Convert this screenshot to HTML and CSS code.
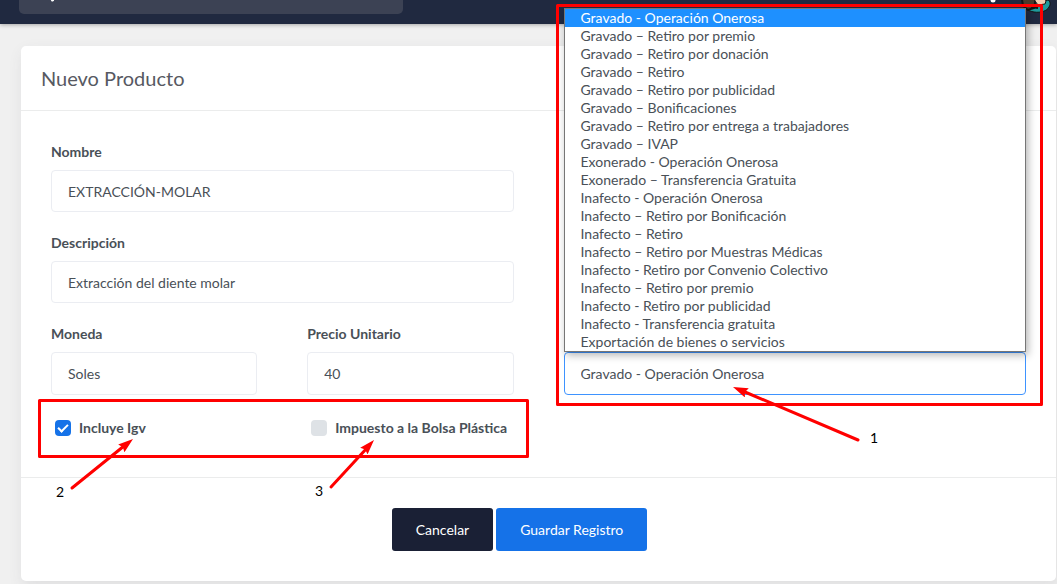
FILE: index.html
```html
<!DOCTYPE html>
<html lang="es">
<head>
<meta charset="utf-8">
<title>Nuevo Producto</title>
<link rel="stylesheet" href="styles.css">
</head>
<body>
<header class="topbar">
  <div class="search">
    <svg class="search-icon" viewBox="0 0 16 16" aria-hidden="true"><circle cx="6" cy="6" r="5"/><path d="M9.500 10l2 4"/></svg>
    <input class="search-input" type="search" aria-label="Buscar">
  </div>
  <div class="topbar-tools">
    <svg class="bell" viewBox="0 0 16 16" aria-hidden="true"><path d="M2 11h12l-2-3V5a4 4 0 0 0-8 0v3z"/><circle cx="8" cy="13" r="2.500"/></svg>
    <svg class="avatar" viewBox="0 0 36 36" aria-hidden="true">
      <path d="M8 27c-1 4 3 7 9 8 7 1 13-1 15-5 2-3 1-6-1-7z" fill="#1f9a9c" stroke="#141414" stroke-width="1"/>
      <path d="M4 16l2 13 5 4 6-2 3-15z" fill="#4a3a2c" stroke="#141414" stroke-width="2"/>
      <path d="M17 16l1 8 3 4 7-1 1-3-3-8z" fill="#f0cdb0" stroke="#141414" stroke-width="1"/>
      <path d="M14 30l7 1" fill="none" stroke="#141414" stroke-width="2"/>
    </svg>
  </div>
</header>

<main class="page">
  <form class="card">
    <div class="card-header"><h1 class="card-title">Nuevo Producto</h1></div>
    <div class="card-body">
      <div class="column">
        <div class="field">
          <label for="nombre">Nombre</label>
          <input class="control" id="nombre" type="text" value="EXTRACCIÓN-MOLAR">
        </div>
        <div class="field">
          <label for="descripcion">Descripción</label>
          <input class="control" id="descripcion" type="text" value="Extracción del diente molar">
        </div>
        <div class="pair">
          <div class="field">
            <label for="moneda">Moneda</label>
            <select class="control control-tall" id="moneda"><option>Soles</option></select>
          </div>
          <div class="field">
            <label for="precio">Precio Unitario</label>
            <input class="control control-tall" id="precio" type="text" inputmode="decimal" value="40">
          </div>
        </div>
        <div class="pair">
          <label class="check"><input type="checkbox" checked>Incluye Igv</label>
          <label class="check"><input type="checkbox">Impuesto a la Bolsa Plástica</label>
        </div>
      </div>
      <div class="column column-tax">
        <div class="dropdown">
          <select class="control control-tall control-active" aria-label="Tipo de afectación">
            <option>Gravado - Operación Onerosa</option>
          </select>
          <ul class="options">
            <li class="selected">Gravado - Operación Onerosa</li>
            <li>Gravado – Retiro por premio</li>
            <li>Gravado – Retiro por donación</li>
            <li>Gravado – Retiro</li>
            <li>Gravado – Retiro por publicidad</li>
            <li>Gravado – Bonificaciones</li>
            <li>Gravado – Retiro por entrega a trabajadores</li>
            <li>Gravado – IVAP</li>
            <li>Exonerado - Operación Onerosa</li>
            <li>Exonerado – Transferencia Gratuita</li>
            <li>Inafecto - Operación Onerosa</li>
            <li>Inafecto – Retiro por Bonificación</li>
            <li>Inafecto – Retiro</li>
            <li>Inafecto – Retiro por Muestras Médicas</li>
            <li>Inafecto - Retiro por Convenio Colectivo</li>
            <li>Inafecto – Retiro por premio</li>
            <li>Inafecto - Retiro por publicidad</li>
            <li>Inafecto - Transferencia gratuita</li>
            <li>Exportación de bienes o servicios</li>
          </ul>
        </div>
      </div>
    </div>
    <div class="card-footer">
      <button class="btn btn-dark" type="button">Cancelar</button>
      <button class="btn btn-primary" type="submit">Guardar Registro</button>
    </div>
  </form>
</main>

<svg class="notes" width="1057" height="584" viewBox="0 0 1057 584">
  <defs>
    <marker id="head" markerUnits="userSpaceOnUse" markerWidth="16" markerHeight="10" refX="15" refY="5" orient="auto">
      <path d="M15 5L0 0L2 5L0 10z" fill="#f00"/>
    </marker>
  </defs>
  <rect class="frame" x="557.500" y="5.500" width="484" height="399"/>
  <rect class="frame" x="39.500" y="400.500" width="488" height="56"/>
  <path class="arrow" d="M858 440L745 392"/>
  <path class="arrow" d="M72 488L124 446"/>
  <path class="arrow" d="M331 487L367 448"/>
  <path class="tip" d="M858 440L733 387"/>
  <path class="tip" d="M72 488L133 439"/>
  <path class="tip" d="M331 487L374 440"/>
  <text class="note" x="870" y="443">1</text>
  <text class="note" x="56" y="497">2</text>
  <text class="note" x="315" y="496">3</text>
</svg>
</body>
</html>
```
FILE: styles.css
```css
* { box-sizing: border-box; }

body {
  position: relative;
  margin: 0;
  min-height: 100vh;
  overflow: hidden;
  background: #f0f0f0;
  color: #495057;
  font: 14px/21px Lato, "Liberation Sans", sans-serif;
}

.topbar {
  display: flex;
  align-items: flex-end;
  justify-content: space-between;
  height: 24px;
  padding: 0 4px 0 19px;
  overflow: hidden;
  background: #202940;
  box-shadow: 0 1px 4px rgba(0, 0, 0, 0.3);
}

.search {
  display: flex;
  flex: 0 0 384px;
  align-items: center;
  height: 40px;
  margin-bottom: 10px;
  padding: 0 22px;
  border-radius: 5px;
  background: #3c4254;
}

.search-icon { width: 16px; height: 16px; fill: none; stroke: #fff; stroke-width: 3; stroke-linecap: round; }
.search-input { flex: 1; min-width: 0; border: 0; background: transparent; color: #fff; font: inherit; }

.topbar-tools { display: flex; align-items: flex-end; gap: 16px; }
.bell { width: 16px; height: 16px; margin-bottom: 21px; fill: #fff; }
.avatar { width: 36px; height: 36px; margin-bottom: 11px; }

.page { padding: 22px 1px 3px 21px; }

.card {
  border-radius: 5px;
  background: #fff;
  box-shadow: 2px 6px 15px rgba(69, 65, 78, 0.1);
}

.card-header {
  padding: 18px 20px;
  border-bottom: 1px solid #ebecec;
}

.card-title {
  margin: 0;
  color: #575962;
  font-size: 20px;
  font-weight: 400;
  line-height: 28px;
}

.card-body {
  display: grid;
  grid-template-columns: 1fr 1fr;
  gap: 50px;
  padding: 30px 30px 39px;
}

.column { display: flex; flex-direction: column; gap: 20px; }
.column-tax { justify-content: flex-end; padding-bottom: 43px; }

.field { display: flex; flex-direction: column; gap: 8px; }
.field label, .check { color: #495057; font-weight: 700; }

.pair { display: grid; grid-template-columns: 1fr 1fr; gap: 50px; }

.control {
  display: block;
  width: 100%;
  height: 42px;
  padding: 0 16px;
  border: 1px solid #ebedf2;
  border-radius: 4px;
  background: #fff;
  color: #495057;
  font: inherit;
  appearance: none;
}

.control-tall { height: 43px; }
.control-active { border-color: #3e93ff; }

.check {
  display: flex;
  align-items: center;
  gap: 8px;
  padding: 2px 0 0 4px;
  white-space: nowrap;
}

.check input {
  width: 16px;
  height: 16px;
  margin: 0;
  border-radius: 4px;
  background: #dee2e6;
  appearance: none;
}

.check input:checked { display: grid; place-items: center; background: #1572e8; }

.check input:checked::before {
  content: "";
  width: 8px;
  height: 4px;
  margin-bottom: 2px;
  border: solid #fff;
  border-width: 0 0 2px 2px;
  transform: rotate(-45deg);
}

.dropdown { position: relative; }

.options {
  position: absolute;
  right: 0;
  bottom: 100%;
  left: 0;
  margin: 0;
  padding: 0;
  border: 1px solid #767676;
  background: #fff;
  box-shadow: 2px 3px 8px rgba(0, 0, 0, 0.3);
  line-height: 18px;
  list-style: none;
}

.options li { padding: 0 16px; }
.options .selected { background: #1e90ff; color: #fff; }

.card-footer {
  display: flex;
  justify-content: center;
  gap: 3px;
  padding: 30px 38px 30px 0;
  border-top: 1px solid #ebecec;
}

.btn {
  padding: 11px 24px;
  border: 0;
  border-radius: 3px;
  color: #fff;
  font: inherit;
}

.btn-dark { background: #1a2035; }
.btn-primary { background: #1572e8; }

.notes { position: absolute; top: 0; left: 0; pointer-events: none; }
.frame { fill: none; stroke: #f00; stroke-width: 3; stroke-linejoin: round; }
.arrow { fill: none; stroke: #f00; stroke-width: 3; stroke-linecap: round; }
.tip { fill: none; stroke: none; marker-end: url(#head); }
.note { fill: #000; font-size: 14px; }
```
